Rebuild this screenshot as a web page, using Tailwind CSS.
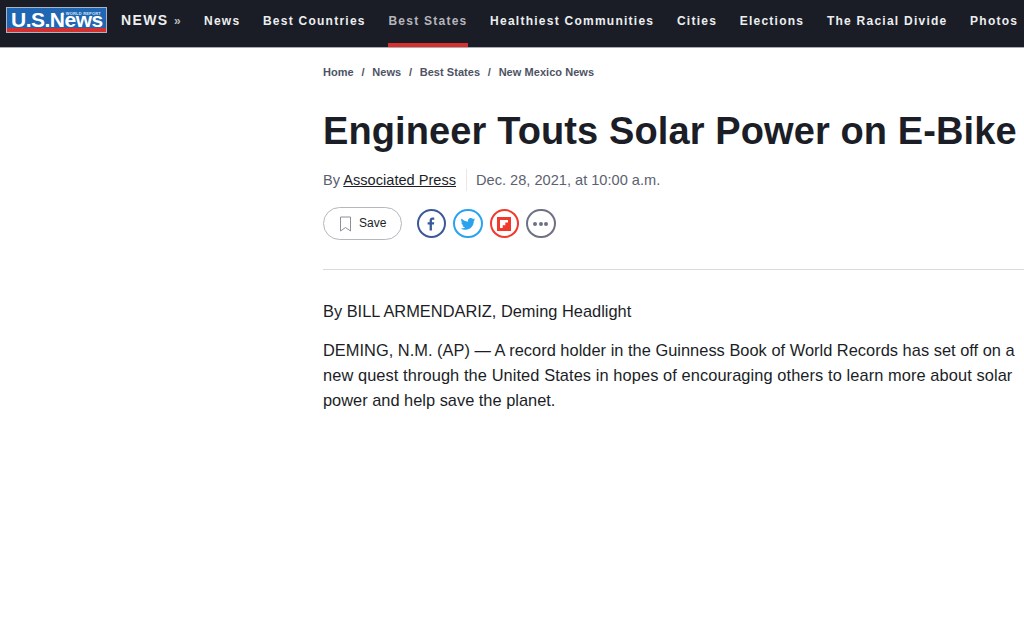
<!DOCTYPE html>
<html lang="en">
<head>
  <meta charset="UTF-8" />
  <title>Engineer Touts Solar Power on E-Bike</title>
  <script src="https://cdn.jsdelivr.net/npm/@tailwindcss/browser@4"></script>
</head>
<body class="bg-white font-['Liberation_Sans',sans-serif] text-[#1b1e27] overflow-hidden h-[619px]">

  <!-- Top Bar -->
  <header class="bg-[#1a1d26] h-[48px] border-b border-[#a9abb2] flex items-start pl-[6px] overflow-hidden whitespace-nowrap">
    <a href="#" class="relative block mt-[7px] w-[101px] h-[26px] shrink-0 bg-[#1f66b3] border border-[#a9b4c4] overflow-hidden">
      <span class="absolute right-[5px] top-[4px] text-[4px] leading-[4px] font-bold text-[#d5e1ef] tracking-[0.2px]">&amp; WORLD REPORT</span>
      <span class="absolute left-[4px] top-[2px] text-[21px] leading-[20px] font-bold text-white tracking-[-0.5px]">U.S.News</span>
      <span class="absolute left-0 right-0 bottom-0 h-[4px] bg-[#d3302f]"></span>
    </a>
    <a href="#" class="ml-[14px] mt-[12px] text-[14px] leading-[17px] font-bold tracking-[1.4px] text-[#eceef0] shrink-0">NEWS <span class="text-[12px] text-[#b9bbc0]">»</span></a>
    <nav class="ml-[22px] flex gap-[22.6px] text-[12px] font-bold tracking-[1.25px] text-[#eceef0]">
      <a href="#" class="h-[47px] pt-[13px] leading-[16px]">News</a>
      <a href="#" class="h-[47px] pt-[13px] leading-[16px]">Best Countries</a>
      <a href="#" class="h-[47px] pt-[13px] leading-[16px] text-[#b4b6bc] border-b-[4px] border-[#d8302c]">Best States</a>
      <a href="#" class="h-[47px] pt-[13px] leading-[16px]">Healthiest Communities</a>
      <a href="#" class="h-[47px] pt-[13px] leading-[16px]">Cities</a>
      <a href="#" class="h-[47px] pt-[13px] leading-[16px]">Elections</a>
      <a href="#" class="h-[47px] pt-[13px] leading-[16px]">The Racial Divide</a>
      <a href="#" class="h-[47px] pt-[13px] leading-[16px]">Photos</a>
    </nav>
  </header>

  <!-- Article -->
  <main class="pl-[323px]">
    <div class="pt-[17px] flex gap-[7.7px] text-[11px] leading-[14px] font-bold tracking-[0.05px] text-[#4d5364] whitespace-nowrap">
      <a href="#">Home</a><span>/</span><a href="#">News</a><span>/</span><a href="#">Best States</a><span>/</span><a href="#">New Mexico News</a>
    </div>

    <h1 class="mt-[30px] text-[38px] leading-[44px] font-bold tracking-[0.11px] whitespace-nowrap">Engineer Touts Solar Power on E-Bike</h1>

    <div class="mt-[16px] flex items-center text-[14.6px] leading-[20px] text-[#5c6170] whitespace-nowrap">
      <span>By <a href="#" class="text-[#1b1e27] underline">Associated Press</a></span>
      <span class="ml-[10px] mr-[9px] h-[22px] w-px bg-[#e6e7ea]"></span>
      <span>Dec. 28, 2021, at 10:00 a.m.</span>
    </div>

    <div class="mt-[16px] flex items-center">
      <button class="w-[79px] h-[33px] rounded-full border border-[#b5b7bd] flex items-center pl-[15px] text-[12px] text-[#1b1e27]">
        <svg class="w-[13px] h-[16px] text-[#8d909a]" fill="none" stroke="currentColor" stroke-width="1" viewBox="0 0 13 16"><path d="M1.5 1h10v14l-5-3.5-5 3.5z" /></svg>
        <span class="ml-[7px] -mt-[1px]">Save</span>
      </button>
      <div class="ml-[14.5px] flex gap-[7px]">
        <a href="#" class="w-[29.5px] h-[29.5px] rounded-full border-2 border-[#3b5998] flex items-center justify-center">
          <svg class="w-[14px] h-[14px]" fill="#3b5998" viewBox="0 0 24 24"><path d="M13.6 23v-10h3.4l.5-4h-3.9V6.500c0-1.150.32-1.900 1.950-1.900H17.600V1.100C17.200 1.050 16 1 14.600 1c-3 0-5 1.800-5 5.100V9H6.200v4h3.400v10z" /></svg>
        </a>
        <a href="#" class="w-[29.5px] h-[29.5px] rounded-full border-2 border-[#2aa3ef] flex items-center justify-center">
          <svg class="w-[16px] h-[16px]" fill="#2aa3ef" viewBox="0 0 24 24"><path d="M23 5.100c-.8.360-1.680.6-2.600.7a4.500 4.500 0 0 0 2-2.500c-.87.520-1.840.9-2.860 1.100a4.500 4.500 0 0 0-7.700 4.100C8.100 8.300 4.800 6.500 2.500 3.800a4.500 4.500 0 0 0 1.400 6c-.74-.02-1.440-.23-2.040-.56v.06a4.500 4.500 0 0 0 3.600 4.420c-.66.180-1.360.2-2.030.08a4.500 4.500 0 0 0 4.200 3.120A9 9 0 0 1 1 18.700 12.700 12.700 0 0 0 7.900 20.700c8.300 0 12.840-6.880 12.840-12.840l-.02-.58A9 9 0 0 0 23 5.100z" /></svg>
        </a>
        <a href="#" class="w-[29.5px] h-[29.5px] rounded-full border-2 border-[#f1392c] flex items-center justify-center">
          <svg class="w-[14px] h-[14px]" viewBox="0 0 14 14"><path fill="#f1392c" d="M0 0h14v14H0z" /><path fill="#fff" d="M3 3h8v2.600H8.300v2.700H5.700V11H3z" /></svg>
        </a>
        <a href="#" class="w-[29.5px] h-[29.5px] rounded-full border-2 border-[#6d7282] flex items-center justify-center gap-[1.5px]">
          <span class="w-[4px] h-[4px] rounded-full bg-[#6d7282]"></span>
          <span class="w-[4px] h-[4px] rounded-full bg-[#6d7282]"></span>
          <span class="w-[4px] h-[4px] rounded-full bg-[#6d7282]"></span>
        </a>
      </div>
    </div>

    <hr class="mt-[29px] border-[#d9dadd]" />

    <div class="mt-[29px] text-[16.4px] leading-[25px] text-[#1b1e27] whitespace-nowrap">
      <p>By BILL ARMENDARIZ, Deming Headlight</p>
      <p class="mt-[14px]"><span class="tracking-[0.02px]">DEMING, N.M. (AP) — A record holder in the Guinness Book of World Records has set off on a</span><br /><span class="tracking-[0.085px]">new quest through the United States in hopes of encouraging others to learn more about solar</span><br />power and help save the planet.</p>
    </div>
  </main>

</body>
</html>
